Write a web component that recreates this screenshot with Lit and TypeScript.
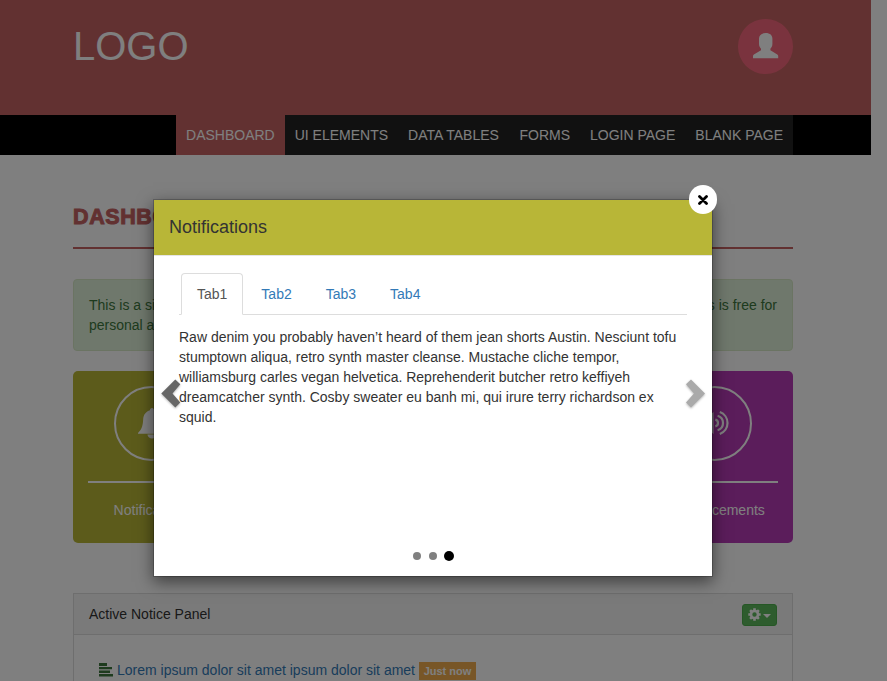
import { LitElement, html, css, svg } from "lit";
import { customElement, state } from "lit/decorators.js";
import { classMap } from "lit/directives/class-map.js";

const icons = {
  user: svg`<path d="M12.700 0C8.300 0 6 2.300 6 5.800v5c0 2.500 1 3.800 2 4.900v1.500L.9 21.400Q0 22 0 23v2.200h25.200V23q0-1-.9-1.600L17.400 17.200v-1.500c1-1.100 2-2.400 2-4.900v-5C19.400 2.300 17.100 0 12.700 0z"/>`,
  bell: svg`<path d="M14 0c-1.300 0-2 1-2 2.200C8 3.400 5.500 6.500 5.200 11 4.900 17 4 21 .6 24.200q-.9.900-.5 1.600h27.800q.4-.7-.5-1.600C24 21 23.100 17 22.800 11 22.500 6.500 20 3.400 16 2.200 16 1 15.300 0 14 0zM9.500 26.500a4.500 4 0 0 0 9 0z"/>`,
  sound: svg`<path d="M0 8h6l8.500-7v22L6 16H0z"/><g fill="none" stroke="currentColor" stroke-width="2.200"><path d="M16.300 8.600a3.500 3.500 0 0 1 0 6.800M18.600 4.800a7.500 7.500 0 0 1 0 14.400M20.800 1a11.700 11.700 0 0 1 0 22"/></g>`,
};

@customElement("app-root")
export class AppRoot extends LitElement {
  @state() private tab = 0;
  @state() private slide = 2;

  static styles = css`
    :host { display: block; position: relative; height: 681px; overflow: hidden; background: #fff; color: #333;
      font: 14px/20px "Liberation Sans", Arial, sans-serif; }
    * { box-sizing: border-box; }
    svg { display: block; fill: currentColor; }
    .bar { width: 871px; padding: 0 78px 0 73px; display: flex; }
    .header { height: 115px; background: #c56363; color: #fff; justify-content: space-between; padding-top: 19px; }
    .logo { font-size: 40px; line-height: 55px; }
    .avatar { width: 55px; height: 55px; border-radius: 50%; background: #f5677d; display: grid; place-items: center; padding-bottom: 1px; }
    .nav { height: 40px; background: #000; justify-content: flex-end; }
    .nav a { padding: 10px; background: #222; color: #fff; white-space: nowrap; }
    .nav a:nth-child(3) { padding-right: 10.600px; }
    .nav a.active { background: #c56363; }
    .content { width: 720px; margin-left: 73px; }
    .heading { height: 94px; margin: 0 0 30px; border-bottom: 2px solid #c56363; padding-top: 47px;
      font-size: 21.500px; font-weight: 900; line-height: 30px; letter-spacing: .6px; color: #c56363; -webkit-text-stroke: 1px #c56363; }
    .alert { height: 72px; padding: 15px; border: 1px solid #d6e9c6; border-radius: 4px; background: #dff0d8; color: #3c763d; }
    .line { display: flex; justify-content: space-between; }
    .tiles { margin-top: 20px; display: grid; grid-template-columns: repeat(4, 157.5px); justify-content: space-between; }
    .tile { height: 172px; padding: 15px; border-radius: 5px; color: #fff; text-align: center; background: #b8b637; }
    .tile.purple { grid-column: 4; background: #b73bb6; }
    .ring { width: 75px; height: 75px; margin: 0 auto; border: 2px solid; border-radius: 50%; display: grid; place-items: center; padding-bottom: 1px; }
    .rule { height: 2px; background: #fff; margin: 20px 0 17px; }
    .panel { margin-top: 50px; height: 200px; border: 1px solid #ddd; }
    .panel-head { height: 41px; padding: 10px 15px 0; background: #f5f5f5; border-bottom: 1px solid #ddd; display: flex;
      justify-content: space-between; align-items: flex-start; }
    .gear { width: 35px; height: 22px; border: 1px solid #4cae4c; border-radius: 3px; background: #5cb85c; color: #fff;
      display: flex; align-items: center; gap: 2px; padding: 0 0 1px 5px; }
    .caret { margin-top: 3px; }
    .notice { display: flex; align-items: center; padding: 25px 0 0 25px; color: #337ab7; }
    .notice svg { color: #3c763d; margin-right: 4px; }
    .label { margin: 2px 0 0 4px; height: 18px; width: 57px; text-align: center; background: #f0ad4e; color: #fff; font-weight: bold;
      font-size: 11px; line-height: 18px; }
    .backdrop { position: absolute; inset: 0; background: rgba(0, 0, 0, .5); }
    .modal { position: absolute; left: 153px; top: 199px; width: 560px; height: 378px; background: #fff;
      background-clip: padding-box; border: 1px solid rgba(0, 0, 0, .2); box-shadow: 0 5px 15px rgba(0, 0, 0, .5); }
    .modal-head { height: 56px; padding: 15px; border-bottom: 1px solid #e5e5e5; background: #b8b637; font-size: 18px; line-height: 25px; }
    .modal-body { padding: 17px 25px 0; }
    .tabs { display: flex; gap: 2px; padding-left: 2px; border-bottom: 1px solid #ddd; }
    .tab { margin-bottom: -1px; padding: 10px 15px; border: 1px solid transparent; border-radius: 4px 4px 0 0; color: #337ab7; height: 42px; }
    .tab.active { color: #555; border-color: #ddd #ddd #fff; background: #fff; }
    .text { margin: 12px 0 0; width: 508px; }
    .close { position: absolute; left: 535px; top: -15px; width: 28px; height: 29px; border-radius: 14px; background: #fff;
      color: #000; display: grid; place-items: center; }
    .arrow { position: absolute; top: 179px; color: #666; filter: drop-shadow(0 1px 1px rgba(0, 0, 0, .3)); }
    .arrow.prev { left: 7px; }
    .arrow.next { left: 532px; color: #aaa; }
    .dots { position: absolute; left: 0; right: 0; bottom: 15px; height: 10px; display: flex; justify-content: center; align-items: center; gap: 8px; }
    .dot { width: 8px; height: 8px; border-radius: 50%; background: #808080; }
    .dot.active { width: 10px; height: 10px; margin-left: -1px; background: #000; }
  `;

  render() {
    const nav = ["DASHBOARD", "UI ELEMENTS", "DATA TABLES", "FORMS", "LOGIN PAGE", "BLANK PAGE"];
    return html`
      <header class="bar header">
        <div class="logo">LOGO</div>
        <div class="avatar"><svg width="26" height="26">${icons.user}</svg></div>
      </header>
      <nav class="bar nav">${nav.map((n, i) => html`<a class=${classMap({ active: i === 0 })}>${n}</a>`)}</nav>
      <main class="content">
        <h1 class="heading">DASHBOARD</h1>
        <div class="alert">
          <div class="line"><span>This is a simple</span><span>this is free for</span></div>
          <div>personal and</div>
        </div>
        <div class="tiles">
          <div class="tile">
            <div class="ring"><svg width="28" height="31">${icons.bell}</svg></div>
            <div class="rule"></div>Notifications
          </div>
          <div class="tile purple">
            <div class="ring"><svg width="30" height="24">${icons.sound}</svg></div>
            <div class="rule"></div>Announcements
          </div>
        </div>
        <section class="panel">
          <div class="panel-head">
            <span>Active Notice Panel</span>
            <div class="gear">
              <svg width="13" height="13" viewBox="-6.500 -6.500 13 13">
                <circle r="3.500" fill="none" stroke="currentColor" stroke-width="2.600" />
                ${[0, 45, 90, 135].map((a) => svg`<path transform="rotate(${a})" d="M-1.300-6.200h2.600v2.400h-2.600zM-1.300 3.800h2.600v2.400h-2.600z"/>`)}
              </svg>
              <svg class="caret" width="8" height="4"><path d="M0 0h8L4 4z" /></svg>
            </div>
          </div>
          <div class="notice">
            <svg width="14" height="14"><path d="M0 0h8v3H0zM0 4h13v2.300H0zM0 7.500h11v2.500H0zM0 11h14v2.500H0z" /></svg>
            <span>Lorem ipsum dolor sit amet ipsum dolor sit amet</span>
            <span class="label">Just now</span>
          </div>
        </section>
      </main>
      <div class="backdrop"></div>
      <div class="modal" role="dialog">
        <div class="modal-head">Notifications</div>
        <div class="modal-body">
          <div class="tabs">
            ${["Tab1", "Tab2", "Tab3", "Tab4"].map(
              (t, i) => html`<a class=${classMap({ tab: true, active: i === this.tab })} @click=${() => (this.tab = i)}>${t}</a>`
            )}
          </div>
          <p class="text">Raw denim you probably haven’t heard of them jean shorts Austin. Nesciunt tofu stumptown aliqua, retro synth master cleanse. Mustache cliche tempor, williamsburg carles vegan helvetica. Reprehenderit butcher retro keffiyeh dreamcatcher synth. Cosby sweater eu banh mi, qui irure terry richardson ex squid.</p>
        </div>
        <svg class="arrow prev" width="20" height="29"><path d="M.3 14.400 14.300.4 19.300 5.200 11.500 14.400l7.800 9.200-5 4.800z" /></svg>
        <svg class="arrow next" width="20" height="29"><path d="M19 14.400 5 .4 0 5.200 8 14.400 0 23.600 5 28.400z" /></svg>
        <div class="dots">
          ${[0, 1, 2].map((i) => html`<span class=${classMap({ dot: true, active: i === this.slide })} @click=${() => (this.slide = i)}></span>`)}
        </div>
        <div class="close"><svg width="10" height="10"><path d="M1.500 1.500l7 7M8.500 1.500l-7 7" stroke="currentColor" stroke-width="2.800" stroke-linecap="round" /></svg></div>
      </div>
    `;
  }
}
